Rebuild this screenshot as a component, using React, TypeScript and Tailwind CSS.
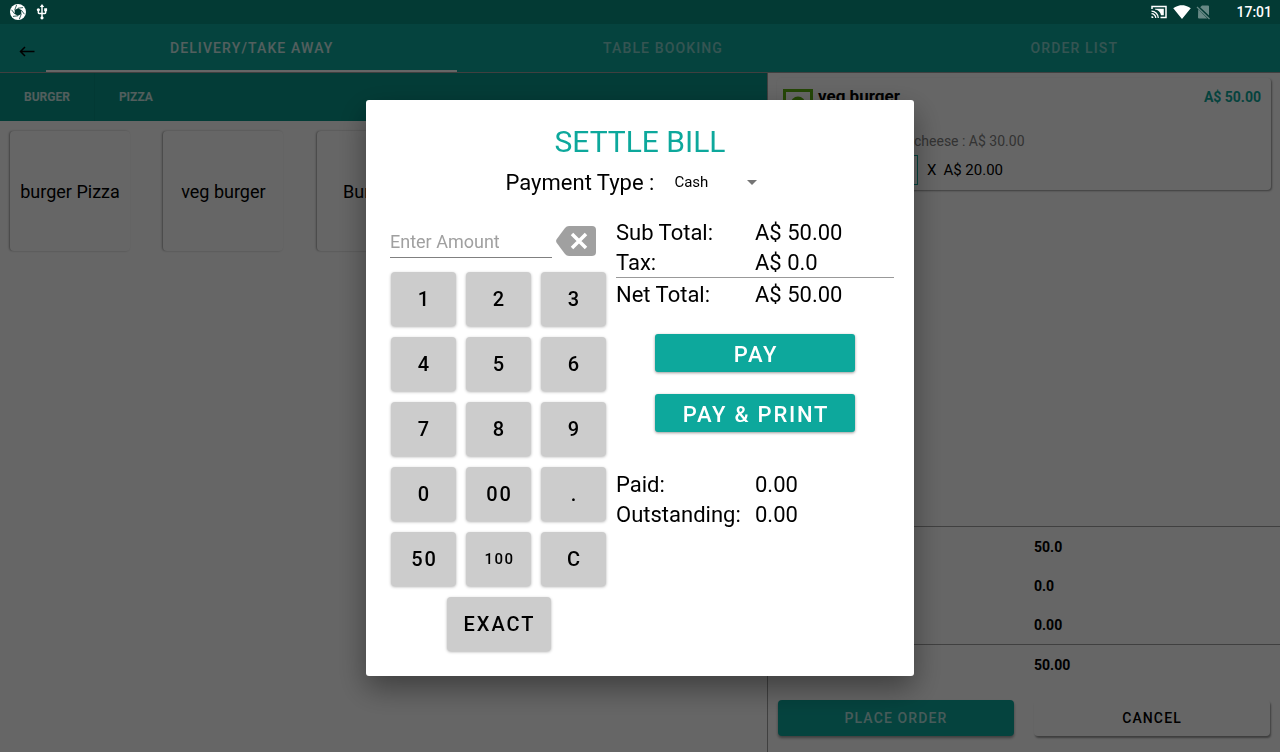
import { useState, type ReactNode } from "react"
import { clsx } from "clsx"
import { MdArrowDropDown, MdSignalWifi4Bar, MdUsb } from "react-icons/md"

const tabs = ["DELIVERY/TAKE AWAY", "TABLE BOOKING", "ORDER LIST"]
const categories = ["BURGER", "PIZZA"]
const products = ["burger Pizza", "veg burger", "Burger 1"]
const keys = ["1", "2", "3", "4", "5", "6", "7", "8", "9", "0", "00", ".", "50", "100", "C"]

const NET_TOTAL = 50

function StatusBar() {
  return (
    <header className="relative z-20 flex h-6 shrink-0 items-center justify-between bg-[#033a34] pr-2 pl-[10px] text-white">
      <div className="flex items-center gap-2">
        <svg viewBox="0 0 16 16" className="h-4 w-4" aria-hidden="true">
          <circle cx="8" cy="8" r="8" fill="currentColor" />
          <path d="M8 4.2 11.3 6.1 11.3 9.9 8 11.8 4.7 9.9 4.7 6.1Z" fill="#033a34" />
          <path
            d="M8 4.2 13 3.6M11.3 6.1 14.4 10.2M11.3 9.9 9.4 15M8 11.8 3 12.4M4.7 9.9 1.6 5.8M4.7 6.1 6.6 1"
            stroke="#033a34"
            strokeWidth="0.8"
          />
        </svg>
        <MdUsb viewBox="2 1 20 22" className="h-4 w-4" />
      </div>
      <div className="flex items-center">
        <svg viewBox="0 0 16 16" className="mr-1.5 h-4 w-4" fill="none" stroke="currentColor" aria-hidden="true">
          <path d="M1 5V2.5h14v11H9.5" strokeWidth="1.5" />
          <path d="M4 4.8h8.8v6.4H10C9.5 8 7 5.8 4 5.5Z" fill="currentColor" stroke="none" />
          <path d="M.5 7.2a6.8 6.8 0 0 1 6.8 6.8M.5 9.7A4.3 4.3 0 0 1 4.8 14" strokeWidth="1.3" />
          <path d="M.5 12v2h2a2 2 0 0 0-2-2Z" fill="currentColor" stroke="none" />
        </svg>
        <MdSignalWifi4Bar className="h-[18px] w-[18px]" />
        <svg viewBox="0 0 16 16" className="mx-1 h-4 w-4 text-white/40" aria-hidden="true">
          <path d="M7 1.5h6q1 0 1 1v9L5.2 3.3ZM3.2 5.3 12.3 14.5H4q-1 0-1-1Z" fill="currentColor" />
          <path d="M2 3 14.5 15" stroke="currentColor" strokeWidth="1.2" />
        </svg>
        <time className="ml-[21px] text-sm font-medium">17:01</time>
      </div>
    </header>
  )
}

function TopTabs() {
  return (
    <nav className="flex h-[49px] shrink-0 border-b border-[#a0a0a0] bg-[#0da89c]">
      <button className="flex w-[46px] items-center justify-center pt-[6px] pl-2 text-black" aria-label="Back">
        <svg viewBox="0 0 16 12" className="h-3 w-4" fill="none" stroke="currentColor" strokeWidth="1.5">
          <path d="M15.5 6.5H1.5M6 2 1.5 6.5 6 11" />
        </svg>
      </button>
      {tabs.map((tab, i) => (
        <a
          key={tab}
          href="#"
          className={clsx(
            "flex flex-1 items-center justify-center border-b-2 pt-[2px] text-sm font-medium tracking-[0.08em]",
            i === 0 ? "border-white text-white/80" : "border-transparent text-white/50"
          )}
        >
          {tab}
        </a>
      ))}
    </nav>
  )
}

function Menu() {
  return (
    <section className="w-3/5 border-r border-[#a0a0a0]">
      <nav className="flex h-12 bg-[#08968a]">
        {categories.map((category) => (
          <a
            key={category}
            href="#"
            className="flex items-center border-r border-black/5 px-6 text-xs font-bold text-white/80 last:border-0"
          >
            {category}
          </a>
        ))}
      </nav>
      <div className="grid grid-cols-5 pt-[10px]">
        {products.map((product) => (
          <button
            key={product}
            className="ml-[10px] h-[120px] w-[120px] rounded pt-[2px] text-lg shadow-[-1px_0_2px_rgba(0,0,0,0.35)]"
          >
            {product}
          </button>
        ))}
      </div>
    </section>
  )
}

function SummaryRow({ children }: { children: ReactNode }) {
  return (
    <div className="grid h-[39px] grid-cols-2 items-center text-sm font-bold">
      <span className="col-start-2 pl-[10px]">{children}</span>
    </div>
  )
}

function Order() {
  return (
    <section className="flex w-2/5 flex-col">
      <article className="mx-[9px] mt-[5px] h-[112px] rounded px-[6px] pt-2 shadow-[1px_1px_2px_rgba(0,0,0,0.4)]">
        <div className="flex items-start">
          <svg viewBox="0 0 30 30" className="mt-[3px] h-[30px] w-[30px]" aria-hidden="true">
            <rect x="1.5" y="1.5" width="27" height="27" fill="none" stroke="#5cb010" strokeWidth="3" />
            <circle cx="15" cy="15" r="7.5" fill="#5cb010" />
          </svg>
          <h2 className="ml-[5px] text-[17px] leading-5 font-bold">veg burger</h2>
          <span className="mt-[1px] mr-1 ml-auto text-sm font-bold text-[#0da89c]">A$ 50.00</span>
        </div>
        <p className="mt-3 ml-[131px] text-sm leading-5 text-[#808080]">cheese : A$ 30.00</p>
        <div className="mt-1 flex items-center text-[15px]">
          <span className="ml-[35px] h-[30px] w-[100px] border border-[#0da89c]" />
          <span className="ml-[9px]">X</span>
          <span className="ml-[7px]">A$ 20.00</span>
        </div>
      </article>
      <div className="mt-auto border-y border-[#a0a0a0]">
        <SummaryRow>50.0</SummaryRow>
        <SummaryRow>0.0</SummaryRow>
        <SummaryRow>0.00</SummaryRow>
      </div>
      <SummaryRow>50.00</SummaryRow>
      <div className="mt-4 mb-4 flex gap-5 px-[10px]">
        <button className="h-9 flex-1 rounded bg-[#0da89c] text-sm font-medium tracking-[0.08em] text-white/70 shadow-[0_2px_3px_rgba(0,0,0,0.4)]">
          PLACE ORDER
        </button>
        <button className="h-9 flex-1 rounded text-sm font-medium tracking-[0.08em] shadow-[1px_2px_2px_rgba(0,0,0,0.4)]">
          CANCEL
        </button>
      </div>
    </section>
  )
}

function TotalRow({ label, value }: { label: string; value: string }) {
  return (
    <div className="grid h-[30px] grid-cols-2 leading-8">
      <dt>{label}</dt>
      <dd>{value}</dd>
    </div>
  )
}

function SettleBill() {
  const [amount, setAmount] = useState("")
  const paid = Number(amount) || 0

  function press(key: string) {
    setAmount(key === "C" ? "" : amount + key)
  }

  const keyClass =
    "h-[54px] rounded bg-[#ccc] pl-[2px] font-medium tracking-widest shadow-[0_1px_3px_rgba(0,0,0,0.3)]"
  const payClass =
    "h-[38px] w-[200px] rounded-[3px] bg-[#0da89c] pt-[3px] pl-[2px] text-[22px] font-medium tracking-[0.08em] text-white shadow-[0_1px_3px_rgba(0,0,0,0.4)]"

  return (
    <div
      role="dialog"
      aria-labelledby="settle-title"
      className="w-[548px] rounded-[3px] bg-white px-5 pt-[22px] pb-[25px] shadow-[0_12px_30px_rgba(0,0,0,0.4)]"
    >
      <h1 id="settle-title" className="text-center text-[30px] leading-10 text-[#0da89c]">
        SETTLE BILL
      </h1>
      <div className="flex h-10 items-center justify-center">
        <label htmlFor="payment-type" className="text-[22px]">
          Payment Type :
        </label>
        <div className="relative ml-5 flex items-center">
          <select id="payment-type" className="w-[100px] appearance-none bg-transparent text-[15px]">
            <option>Cash</option>
            <option>Card</option>
          </select>
          <MdArrowDropDown className="pointer-events-none absolute right-[10px] h-6 w-6 text-[#757575]" />
        </div>
      </div>

      <div className="mt-[15px] flex gap-[10px] pl-1">
        <div className="w-[216px]">
          <div className="flex h-[41px] items-start gap-1 pt-[9px]">
            <input
              aria-label="Enter Amount"
              placeholder="Enter Amount"
              value={amount}
              onChange={(e) => setAmount(e.target.value)}
              className="h-8 w-[162px] border-b border-[#808080] text-lg outline-none placeholder:text-[#a0a0a0]"
            />
            <button aria-label="Delete last digit" onClick={() => setAmount(amount.slice(0, -1))}>
              <svg viewBox="0 0 40 30" className="h-[30px] w-10">
                <path
                  d="M13 0H36Q40 0 40 4V26Q40 30 36 30H13Q10.5 30 9 28L.8 17Q-.6 15 .8 13L9 2Q10.5 0 13 0Z"
                  fill="#a0a0a0"
                />
                <path d="m16 8 14 14M30 8 16 22" stroke="#fff" strokeWidth="3.5" />
              </svg>
            </button>
          </div>
          <div className="mt-[14px] grid grid-cols-3 gap-x-[10px] gap-y-[11px] pl-px">
            {keys.map((key) => (
              <button
                key={key}
                onClick={() => press(key)}
                className={clsx(keyClass, key === "100" ? "text-[15px]" : "text-xl")}
              >
                {key}
              </button>
            ))}
            <button
              onClick={() => setAmount(NET_TOTAL.toFixed(2))}
              className={clsx(keyClass, "col-span-3 w-[104px] justify-self-center text-xl")}
            >
              EXACT
            </button>
          </div>
        </div>

        <div className="flex-1 text-[22px]">
          <dl>
            <TotalRow label="Sub Total:" value="A$ 50.00" />
            <TotalRow label="Tax:" value="A$ 0.0" />
            <div className="border-t border-[#999] pt-[1px]">
              <TotalRow label="Net Total:" value="A$ 50.00" />
            </div>
          </dl>
          <div className="mt-[25px] flex flex-col items-center gap-[22px]">
            <button className={payClass}>PAY</button>
            <button className={payClass}>PAY &amp; PRINT</button>
          </div>
          <dl className="mt-[37px]">
            <TotalRow label="Paid:" value={paid.toFixed(2)} />
            <TotalRow label="Outstanding:" value="0.00" />
          </dl>
        </div>
      </div>
    </div>
  )
}

export default function App() {
  return (
    <div className="flex min-h-screen flex-col bg-white font-[Roboto,sans-serif] text-black">
      <StatusBar />
      <TopTabs />
      <main className="flex flex-1">
        <Menu />
        <Order />
      </main>
      <div className="fixed inset-0 z-10 flex items-center justify-center bg-black/60 pt-6">
        <SettleBill />
      </div>
    </div>
  )
}
